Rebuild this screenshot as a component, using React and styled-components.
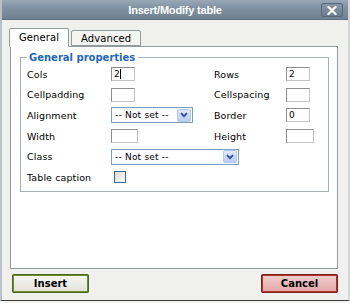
import React from 'react';
import styled, {createGlobalStyle} from 'styled-components';

const GlobalStyle = createGlobalStyle`
  html, body {
    margin: 0;
    padding: 0;
    background: #f4f4f2;
  }
  * {
    box-sizing: border-box;
  }
`;

const App = () => {
    return (
        <Window>
            <GlobalStyle/>
            <TitleBar>
                <Title>Insert/Modify table</Title>
                <CloseButton>
                    <svg width="10" height="9" viewBox="0 0 10 9">
                        <path d="M1.5 1 L8.5 8 M8.5 1 L1.5 8" stroke="#fff" strokeWidth="2.2" strokeLinecap="square"/>
                    </svg>
                </CloseButton>
            </TitleBar>
            <Body>
                <Tabs>
                    <Tab active>General</Tab>
                    <Tab>Advanced</Tab>
                </Tabs>
                <Panel>
                    <Fieldset>
                        <Legend>General properties</Legend>
                        <Grid>
                            <Label>Cols</Label>
                            <Cell><Input>2<Caret/></Input></Cell>
                            <Label>Rows</Label>
                            <Cell><Input>2</Input></Cell>

                            <Label>Cellpadding</Label>
                            <Cell><Input/></Cell>
                            <Label>Cellspacing</Label>
                            <Cell><Input/></Cell>

                            <Label>Alignment</Label>
                            <Cell>
                                <Select width={82}>
                                    <span>-- Not set --</span>
                                    <Arrow/>
                                </Select>
                            </Cell>
                            <Label>Border</Label>
                            <Cell><Input>0</Input></Cell>

                            <Label>Width</Label>
                            <Cell><Input width={27}/></Cell>
                            <Label>Height</Label>
                            <Cell><Input width={28}/></Cell>

                            <Label>Class</Label>
                            <Cell wide>
                                <Select width={128}>
                                    <span>-- Not set --</span>
                                    <Arrow/>
                                </Select>
                            </Cell>

                            <Label>Table caption</Label>
                            <Cell><Checkbox/></Cell>
                        </Grid>
                    </Fieldset>
                </Panel>
                <Footer>
                    <Button variant="insert">Insert</Button>
                    <Button variant="cancel">Cancel</Button>
                </Footer>
            </Body>
        </Window>
    )
}

const Arrow = () => (
    <ArrowBox>
        <svg width="8" height="6" viewBox="0 0 8 6">
            <path d="M1 1.2 L4 4.2 L7 1.2" stroke="#2c4a9a" strokeWidth="1.8" fill="none"/>
        </svg>
    </ArrowBox>
)

const Window = styled.div`
  width: 350px;
  height: 301px;
  display: flex;
  flex-direction: column;
  background: #f0f0ee;
  border-left: 2px solid #b9c0c6;
  border-right: 2px solid #d4d6d8;
  border-bottom: 1px solid #3c3c3c;
  font-family: "DejaVu Sans", Verdana, sans-serif;
  font-size: 9.5px;
  color: #000;
  overflow: hidden;
`;

const TitleBar = styled.div`
  height: 20px;
  margin: 0 -2px;
  flex-shrink: 0;
  display: flex;
  align-items: center;
  justify-content: center;
  position: relative;
  background: linear-gradient(#9aa8b6 0%, #7f90a1 45%, #6f8192 100%);
  border-bottom: 1px solid #5e6f80;
`;

const Title = styled.div`
  color: #fff;
  font-family: "Liberation Sans", Arial, sans-serif;
  font-weight: bold;
  font-size: 11px;
  letter-spacing: -0.2px;
`;

const CloseButton = styled.div`
  position: absolute;
  right: 7px;
  top: 3px;
  width: 22px;
  height: 14px;
  border: 1px solid #55677a;
  border-radius: 2px;
  background: linear-gradient(#8797a8, #6a7c8e);
  display: flex;
  align-items: center;
  justify-content: center;
`;

const Body = styled.div`
  flex: 1;
  display: flex;
  flex-direction: column;
  padding: 8px 10px 0 7px;
`;

const Tabs = styled.div`
  display: flex;
  align-items: flex-end;
  gap: 2px;
  height: 18px;
  position: relative;
  z-index: 1;
`;

const Tab = styled.div`
  height: ${p => p.active ? '19px' : '16px'};
  margin-bottom: ${p => p.active ? '-1px' : '0'};
  padding: 0 9px;
  display: flex;
  align-items: center;
  background: ${p => p.active ? '#fff' : '#f4f4f2'};
  border: 1px solid #919b9c;
  border-bottom: ${p => p.active ? '1px solid #fff' : '1px solid #919b9c'};
  border-radius: 2px 2px 0 0;
  font-size: 10px;
  letter-spacing: 0.1px;
`;

const Panel = styled.div`
  height: 223px;
  background: #fff;
  border: 1px solid #919b9c;
  margin-left: 1px;
  padding: 5px 8px 0 9px;
`;

const Fieldset = styled.fieldset`
  margin: 0;
  padding: 1px 0 9px 6px;
  border: 1px solid #a6b0b8;
  height: 140px;
`;

const Legend = styled.legend`
  padding: 0 3px 0 2px;
  margin-left: 0;
  color: #2466b6;
  font-weight: bold;
  font-size: 10px;
`;

const Grid = styled.div`
  display: grid;
  grid-template-columns: 84px 103px 72px 1fr;
  grid-auto-rows: 18px;
  row-gap: 2.7px;
  margin-top: 1px;
`;

const Label = styled.div`
  display: flex;
  align-items: center;
  letter-spacing: 0.1px;
`;

const Cell = styled.div`
  display: flex;
  align-items: center;
  grid-column: ${p => p.wide ? 'span 3' : 'auto'};
`;

const Input = styled.div`
  width: ${p => p.width || 24}px;
  height: 14px;
  border: 1px solid #8e8e8e;
  border-right-color: #c4c4c4;
  border-bottom-color: #c4c4c4;
  background: #fff;
  display: flex;
  align-items: center;
  padding-left: 2px;
  font-size: 9px;
`;

const Caret = styled.span`
  display: inline-block;
  width: 1px;
  height: 10px;
  background: #000;
`;

const Select = styled.div`
  width: ${p => p.width}px;
  height: 16px;
  border: 1px solid #7f9db9;
  background: #fff;
  display: flex;
  align-items: center;
  justify-content: space-between;
  padding: 0 1px 0 3px;
  letter-spacing: 0.2px;
  font-size: 9px;
`;

const ArrowBox = styled.div`
  width: 14px;
  height: 13px;
  border: 1px solid #b7c8f0;
  border-radius: 2px;
  background: linear-gradient(#dfe9fd, #b8cdf8);
  display: flex;
  align-items: center;
  justify-content: center;
`;

const Checkbox = styled.div`
  width: 12px;
  height: 12px;
  margin-left: 3px;
  border: 1px solid #3f6797;
  background: linear-gradient(135deg, #dcdcd6, #fbfbf9);
`;

const Footer = styled.div`
  display: flex;
  justify-content: space-between;
  padding: 5px 0 0 3px;
`;

const Button = styled.div`
  width: 77px;
  height: 19px;
  display: flex;
  align-items: center;
  justify-content: center;
  font-weight: bold;
  font-size: 10px;
  border: 2px solid ${p => p.variant === 'insert' ? '#6e8d2a' : '#b0322a'};
  outline: 1px solid ${p => p.variant === 'insert' ? '#4d6620' : '#7a2420'};
  outline-offset: -1px;
  border-radius: 2px;
  background: ${p => p.variant === 'insert'
    ? 'linear-gradient(#f6f6f2, #e4e4dc)'
    : 'linear-gradient(#f2cccc, #e4a8a8)'};
`;

export default App;
